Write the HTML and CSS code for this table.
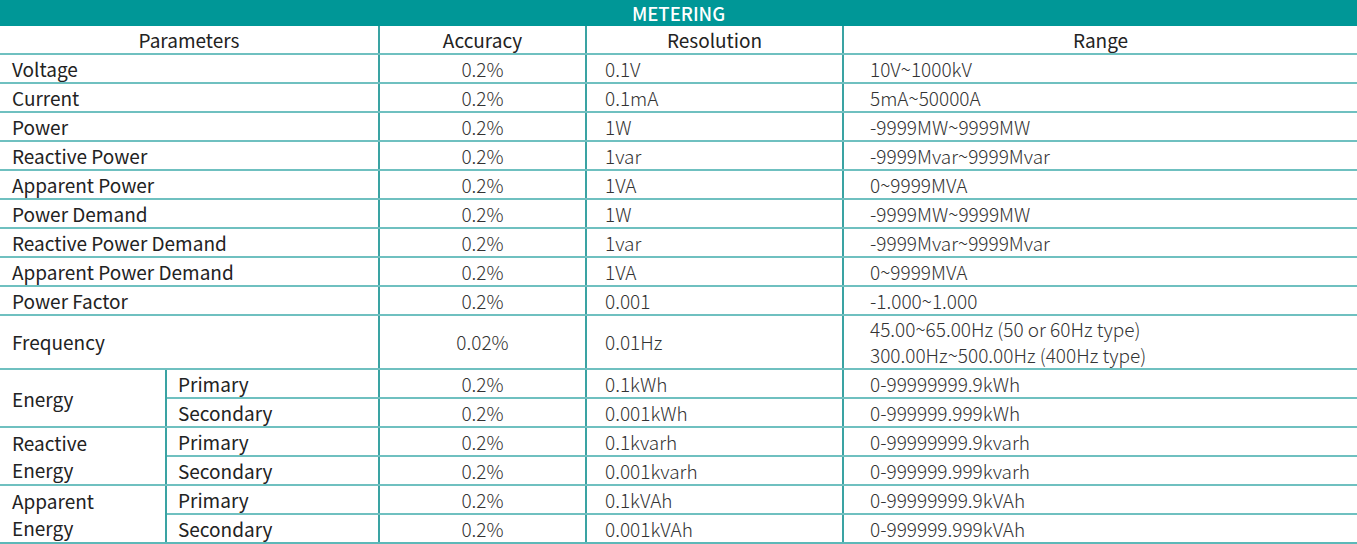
FILE: index.html
```html
<!DOCTYPE html>
<html>
<head>
<meta charset="utf-8">
<link rel="stylesheet" href="styles.css">
</head>
<body>
<table class="spec">
  <colgroup>
    <col class="c-a"><col class="c-b"><col class="c-acc"><col class="c-res"><col class="c-rng">
  </colgroup>
  <thead>
    <tr><th class="title" colspan="5">METERING</th></tr>
    <tr class="head">
      <th colspan="2">Parameters</th>
      <th>Accuracy</th>
      <th>Resolution</th>
      <th>Range</th>
    </tr>
  </thead>
  <tbody>
    <tr><td class="lbl" colspan="2">Voltage</td><td class="acc">0.2%</td><td class="val">0.1V</td><td class="rng">10V~1000kV</td></tr>
    <tr><td class="lbl" colspan="2">Current</td><td class="acc">0.2%</td><td class="val">0.1mA</td><td class="rng">5mA~50000A</td></tr>
    <tr><td class="lbl" colspan="2">Power</td><td class="acc">0.2%</td><td class="val">1W</td><td class="rng">-9999MW~9999MW</td></tr>
    <tr><td class="lbl" colspan="2">Reactive Power</td><td class="acc">0.2%</td><td class="val">1var</td><td class="rng">-9999Mvar~9999Mvar</td></tr>
    <tr><td class="lbl" colspan="2">Apparent Power</td><td class="acc">0.2%</td><td class="val">1VA</td><td class="rng">0~9999MVA</td></tr>
    <tr><td class="lbl" colspan="2">Power Demand</td><td class="acc">0.2%</td><td class="val">1W</td><td class="rng">-9999MW~9999MW</td></tr>
    <tr><td class="lbl" colspan="2">Reactive Power Demand</td><td class="acc">0.2%</td><td class="val">1var</td><td class="rng">-9999Mvar~9999Mvar</td></tr>
    <tr><td class="lbl" colspan="2">Apparent Power Demand</td><td class="acc">0.2%</td><td class="val">1VA</td><td class="rng">0~9999MVA</td></tr>
    <tr><td class="lbl" colspan="2">Power Factor</td><td class="acc">0.2%</td><td class="val">0.001</td><td class="rng">-1.000~1.000</td></tr>
    <tr class="tall"><td class="lbl" colspan="2">Frequency</td><td class="acc">0.02%</td><td class="val">0.01Hz</td><td class="rng">45.00~65.00Hz (50 or 60Hz type)<br>300.00Hz~500.00Hz (400Hz type)</td></tr>
    <tr><td class="lbl grp" rowspan="2">Energy</td><td class="sub">Primary</td><td class="acc">0.2%</td><td class="val">0.1kWh</td><td class="rng">0-99999999.9kWh</td></tr>
    <tr><td class="sub">Secondary</td><td class="acc">0.2%</td><td class="val">0.001kWh</td><td class="rng">0-999999.999kWh</td></tr>
    <tr><td class="lbl grp" rowspan="2">Reactive<br>Energy</td><td class="sub">Primary</td><td class="acc">0.2%</td><td class="val">0.1kvarh</td><td class="rng">0-99999999.9kvarh</td></tr>
    <tr><td class="sub">Secondary</td><td class="acc">0.2%</td><td class="val">0.001kvarh</td><td class="rng">0-999999.999kvarh</td></tr>
    <tr><td class="lbl grp" rowspan="2">Apparent<br>Energy</td><td class="sub">Primary</td><td class="acc">0.2%</td><td class="val">0.1kVAh</td><td class="rng">0-99999999.9kVAh</td></tr>
    <tr class="last"><td class="sub">Secondary</td><td class="acc">0.2%</td><td class="val">0.001kVAh</td><td class="rng">0-999999.999kVAh</td></tr>
  </tbody>
</table>
</body>
</html>
```
FILE: styles.css
```css
html, body {
  margin: 0;
  padding: 0;
  background: #ffffff;
}
body {
  font-family: "Noto Sans CJK SC", "Noto Sans", sans-serif;
  color: #222222;
}
.spec {
  width: 1357px;
  border-collapse: collapse;
  table-layout: fixed;
  font-size: 19px;
}
.c-a { width: 166px; }
.c-b { width: 213px; }
.c-acc { width: 207px; }
.c-res { width: 257px; }
.c-rng { width: 514px; }

.spec th, .spec td {
  padding: 0;
  height: 27px;
  line-height: 24px;
  border-top: 2px solid #6fc0c0;
  border-bottom: 2px solid #6fc0c0;
  border-left: 2px solid #3aa3a3;
  border-right: 2px solid #3aa3a3;
  vertical-align: middle;
  white-space: nowrap;
}
.spec th:first-child, .spec td:first-child { border-left: none; }
.spec th:last-child, .spec td:last-child { border-right: none; }

.title {
  background: #009797;
  color: #ffffff;
  font-weight: 500;
  font-size: 18.5px;
  height: 26px !important;
  line-height: 24px;
  border: none !important;
  text-align: center;
}
.head th {
  font-weight: 400;
  text-align: center;
  border-top: none;
  color: #222222;
}
.lbl {
  padding-left: 12px !important;
  text-align: left;
}
.grp {
  line-height: 27px !important;
}
.sub {
  padding-left: 11px !important;
}
.acc {
  text-align: center;
  font-weight: 300;
  color: #333333;
}
.val {
  padding-left: 18px !important;
  font-weight: 300;
  color: #333333;
}
.rng {
  padding-left: 26px !important;
  font-weight: 300;
  color: #333333;
}
.tall td {
  height: 52px;
  line-height: 26px;
}
tbody tr:last-child td {
  border-bottom: 3px solid #5cb8b8;
}
tbody tr:nth-last-child(2) .grp {
  border-bottom: 3px solid #5cb8b8;
}
```
